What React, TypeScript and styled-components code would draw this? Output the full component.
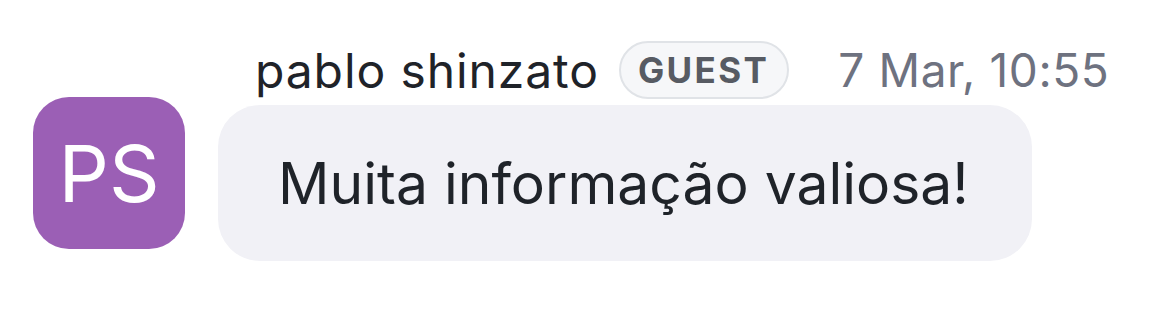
import React from "react";
import styled, { createGlobalStyle } from "styled-components";

const GlobalStyle = createGlobalStyle`
  body {
    margin: 0;
    background: #ffffff;
    font-family: Inter, "Liberation Sans", sans-serif;
  }
`;

export default function App() {
  return (
    <>
      <GlobalStyle />
      <MessageRow>
        <Avatar>PS</Avatar>
        <MessageBody>
          <MessageHeader>
            <AuthorName>pablo shinzato</AuthorName>
            <RoleBadge>GUEST</RoleBadge>
            <Timestamp>7 Mar, 10:55</Timestamp>
          </MessageHeader>
          <Bubble>Muita informação valiosa!</Bubble>
        </MessageBody>
      </MessageRow>
    </>
  );
}

const MessageRow = styled.div`
  display: flex;
  align-items: flex-start;
  gap: 33px;
  padding: 40px 0 0 33px;
`;

const Avatar = styled.div`
  flex: none;
  width: 152px;
  height: 152px;
  margin-top: 57px;
  border-radius: 36px;
  background-color: #9b5fb5;
  color: #fff;
  display: flex;
  align-items: center;
  justify-content: center;
  font-size: 79px;
  font-weight: 400;
`;

const MessageBody = styled.div`
  display: flex;
  flex-direction: column;
  align-items: flex-start;
`;

const MessageHeader = styled.div`
  display: flex;
  align-items: center;
  height: 60px;
  padding-left: 37px;
  margin-bottom: 5px;
  white-space: nowrap;
`;

const AuthorName = styled.span`
  font-size: 48px;
  letter-spacing: 0.9px;
  color: #1f2329;
`;

const RoleBadge = styled.span`
  margin-left: 20px;
  height: 58px;
  box-sizing: border-box;
  display: flex;
  align-items: center;
  padding: 0 18px 0 17px;
  border: 2px solid #e0e3e7;
  border-radius: 30px;
  background-color: #f6f7f9;
  color: #575b63;
  font-size: 35px;
  font-weight: 700;
  letter-spacing: 2.4px;
`;

const Timestamp = styled.span`
  margin-left: 49px;
  font-size: 46px;
  letter-spacing: 0.6px;
  color: #6e7280;
`;

const Bubble = styled.div`
  width: 814px;
  box-sizing: border-box;
  padding: 48px 40px 46px 60px;
  border-radius: 42px;
  background-color: #f1f1f6;
  color: #1f2329;
  font-size: 57px;
  line-height: 62px;
  white-space: nowrap;
`;
